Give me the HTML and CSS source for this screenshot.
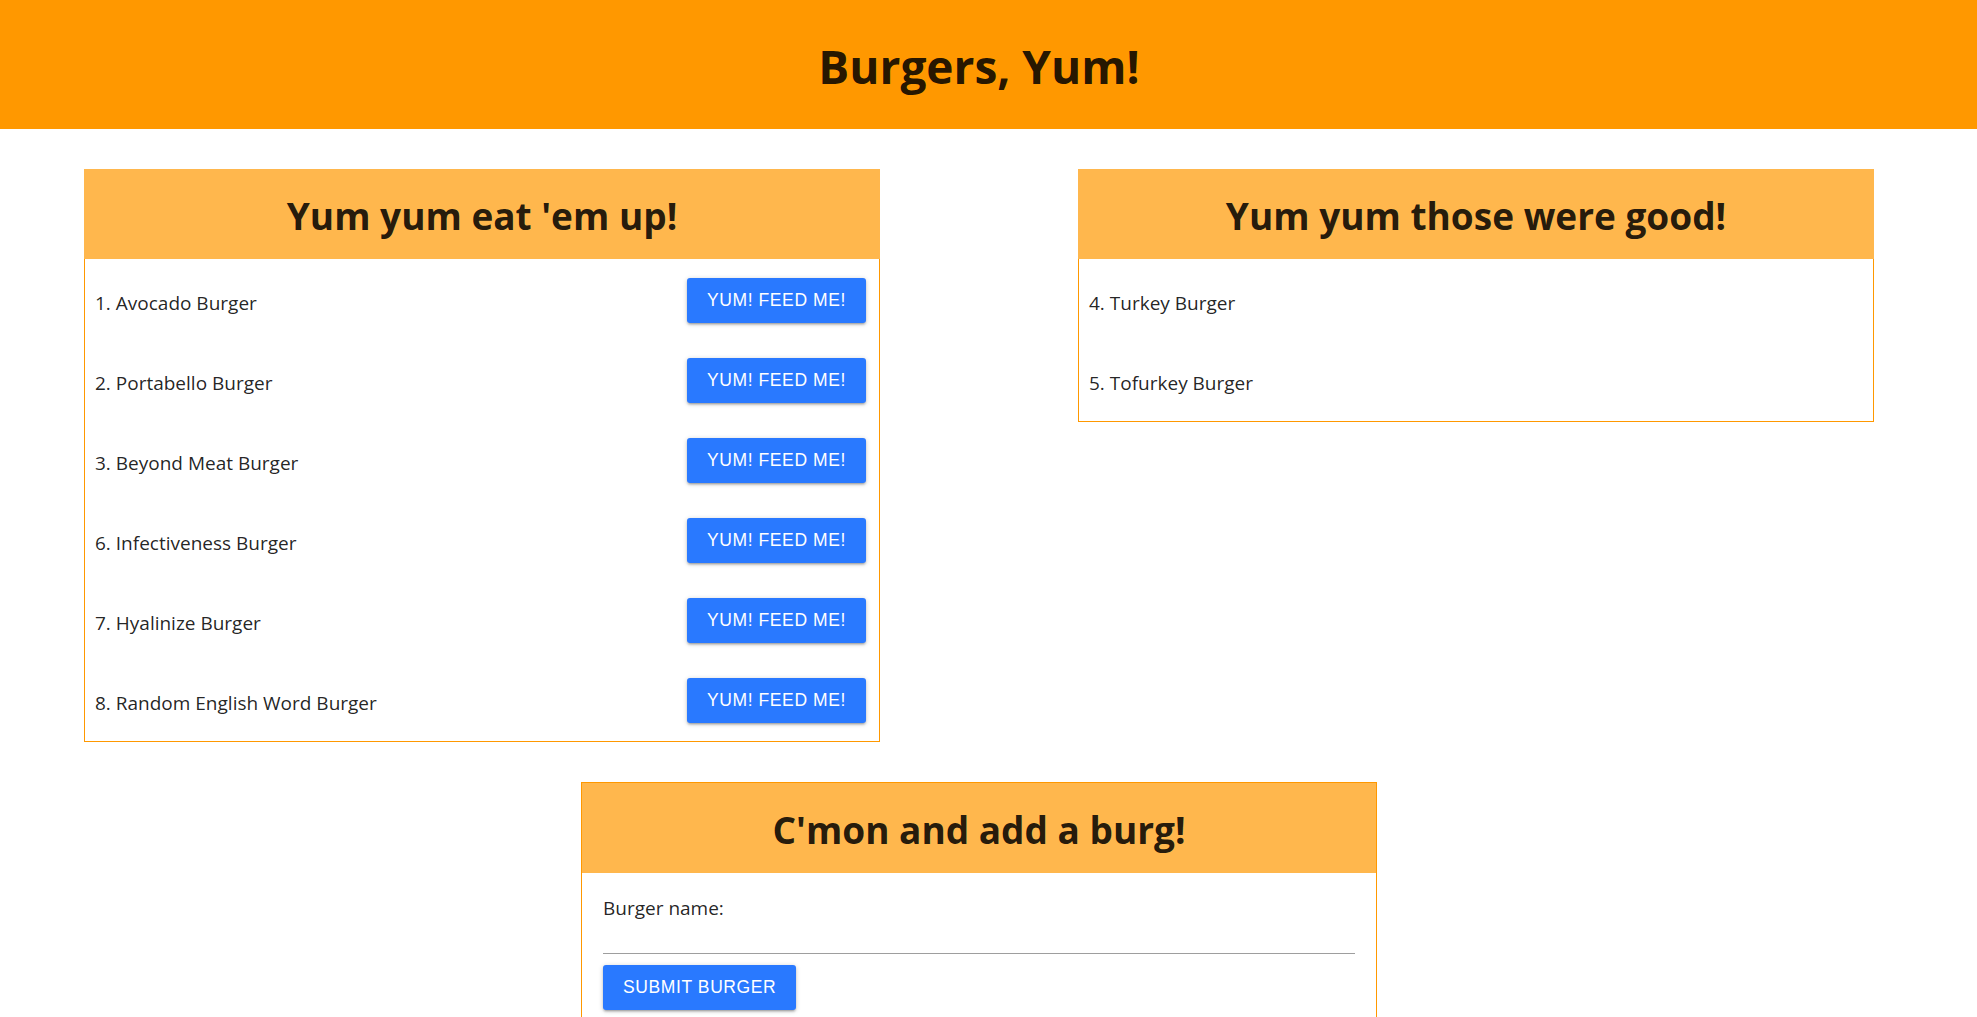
FILE: index.html
```html
<!DOCTYPE html>
<html lang="en">
<head>
<meta charset="utf-8">
<title>Burgers, Yum!</title>
<link rel="stylesheet" href="styles.css">
</head>
<body>
<header class="site-header">
  <h1 class="site-title">Burgers, Yum!</h1>
</header>
<main class="page">
  <div class="columns">
    <section class="panel">
      <h2 class="panel-title">Yum yum eat 'em up!</h2>
      <ul class="burger-list">
        <li class="burger-row"><span class="burger-name">1. Avocado Burger</span><button class="btn">Yum! Feed me!</button></li>
        <li class="burger-row"><span class="burger-name">2. Portabello Burger</span><button class="btn">Yum! Feed me!</button></li>
        <li class="burger-row"><span class="burger-name">3. Beyond Meat Burger</span><button class="btn">Yum! Feed me!</button></li>
        <li class="burger-row"><span class="burger-name">6. Infectiveness Burger</span><button class="btn">Yum! Feed me!</button></li>
        <li class="burger-row"><span class="burger-name">7. Hyalinize Burger</span><button class="btn">Yum! Feed me!</button></li>
        <li class="burger-row"><span class="burger-name">8. Random English Word Burger</span><button class="btn">Yum! Feed me!</button></li>
      </ul>
    </section>
    <section class="panel">
      <h2 class="panel-title">Yum yum those were good!</h2>
      <ul class="burger-list">
        <li class="burger-row"><span class="burger-name">4. Turkey Burger</span></li>
        <li class="burger-row"><span class="burger-name">5. Tofurkey Burger</span></li>
      </ul>
    </section>
  </div>
  <section class="panel panel-form">
    <h2 class="panel-title">C'mon and add a burg!</h2>
    <form class="form-body">
      <label class="field-label" for="burger-name">Burger name:</label>
      <input class="field-input" id="burger-name" type="text">
      <button class="btn" type="button">Submit Burger</button>
    </form>
  </section>
</main>
</body>
</html>
```
FILE: styles.css
```css
html, body {
  margin: 0;
  padding: 0;
}

body {
  font-family: "Open Sans", "Noto Sans", sans-serif;
  color: rgba(0, 0, 0, 0.87);
  background: #ffffff;
}

.site-header {
  background: #ff9800;
}

.site-title {
  width: 1958px;
  height: 129px;
  margin: 0;
  padding-top: 5px;
  box-sizing: border-box;
  display: flex;
  align-items: center;
  justify-content: center;
  font-size: 46px;
  font-weight: 700;
  line-height: 1.2;
}

.page {
  width: 1958px;
  box-sizing: border-box;
  padding: 40px 84px 40px;
}

.columns {
  display: grid;
  grid-template-columns: 796px 796px;
  column-gap: 198px;
  align-items: start;
}

.panel-title {
  margin: 0;
  height: 90px;
  padding-top: 4px;
  box-sizing: border-box;
  display: flex;
  align-items: center;
  justify-content: center;
  background: #ffb74d;
  font-size: 37px;
  font-weight: 700;
  line-height: 1.2;
}

.burger-list {
  list-style: none;
  margin: 0;
  padding: 0 0 2px;
  border: 1px solid #ff9800;
  border-top: 0;
}

.burger-row {
  height: 80px;
  box-sizing: border-box;
  padding: 3px 13px 0 10px;
  display: flex;
  align-items: center;
  justify-content: space-between;
  font-size: 19px;
  line-height: 28px;
}

.burger-name {
  padding-top: 4px;
}

.btn {
  height: 45px;
  padding: 0 20px;
  border: 0;
  border-radius: 3px;
  background: #2979ff;
  color: #ffffff;
  font-family: "Liberation Sans", Arial, sans-serif;
  font-size: 17.5px;
  letter-spacing: 0.6px;
  text-transform: uppercase;
  cursor: pointer;
  box-shadow: 0 2px 2px 0 rgba(0, 0, 0, 0.14), 0 3px 1px -2px rgba(0, 0, 0, 0.12), 0 1px 5px 0 rgba(0, 0, 0, 0.2);
}

.panel-form {
  width: 796px;
  box-sizing: border-box;
  margin: 40px auto 0;
  border: 1px solid #ff9800;
}

.form-body {
  margin: 0;
  padding: 21px 21px 21px;
}

.field-label {
  display: block;
  font-size: 19px;
  line-height: 28px;
}

.field-input {
  display: block;
  width: 100%;
  height: 31px;
  margin: 0 0 11px;
  padding: 0;
  border: 0;
  border-bottom: 1px solid #9e9e9e;
  background: transparent;
  outline: none;
  font: inherit;
  font-size: 19px;
  box-sizing: content-box;
}
```
